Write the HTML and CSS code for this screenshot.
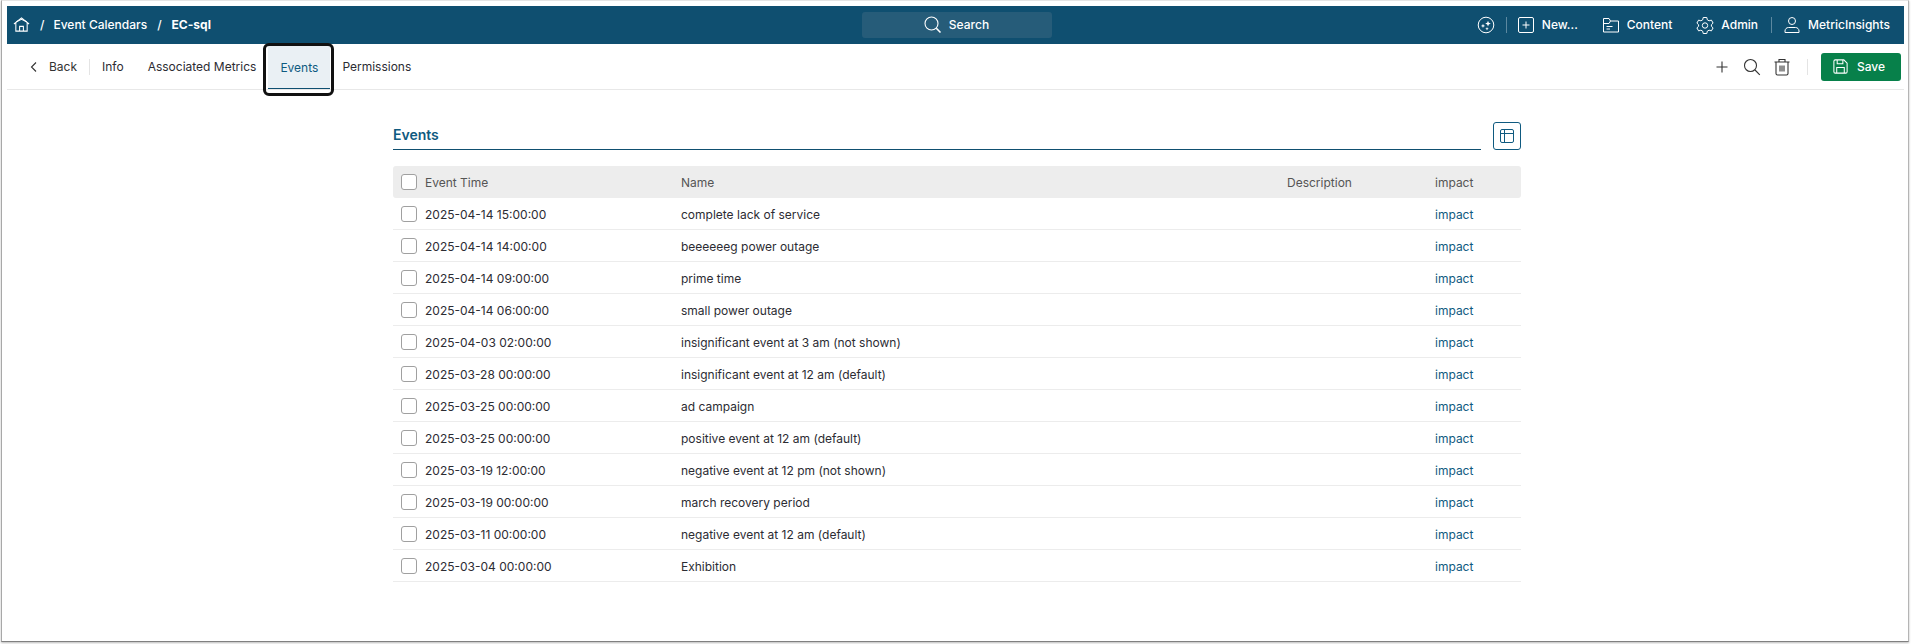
FILE: index.html
```html
<!DOCTYPE html>
<html lang="en">
<head>
<meta charset="utf-8">
<title>Events</title>
<link rel="stylesheet" href="styles.css">
</head>
<body>
<div class="window">
  <header class="topbar">
    <div class="crumbs">
      <svg class="ico-home" viewBox="0 0 18 18" fill="none" stroke="currentColor" stroke-width="1.1"><path d="M1 8.500 9 2l8 6.500M3 7.500V16h12V7.500"/><path d="M3.500 6 9 3.500 14.500 6"/><path d="M7 16v-5h4v5"/></svg>
      <span class="sep sep-first">/</span><span>Event Calendars</span><span class="sep">/</span><b>EC-sql</b>
    </div>
    <div class="search">
      <svg class="ico" viewBox="0 0 18 18" fill="none" stroke="currentColor" stroke-width="1.1"><circle cx="7.500" cy="7.500" r="6.500"/><path d="m12.300 12.300 4.200 4.200" stroke-width="1.600"/></svg>
      <span>Search</span>
    </div>
    <div class="top-actions">
      <svg class="ico ai" viewBox="0 0 18 18" fill="none" stroke="currentColor" stroke-width="1"><circle cx="9" cy="9" r="7.800"/><path d="m11 4.800.8 2 2 .8-2 .8-.8 2-.8-2-2-.8 2-.8zM6 7.800l.6 1.500 1.500.6-1.500.6L6 12l-.6-1.500-1.500-.6 1.500-.6zM10 11l.5 1.200 1.200.5-1.200.5-.5 1.200-.5-1.200-1.200-.5 1.200-.5z" fill="currentColor" stroke="none"/></svg>
      <i class="vline vline-ai"></i>
      <span class="act new"><svg class="ico" viewBox="0 0 18 18" fill="none" stroke="currentColor" stroke-width="1"><rect x="1.500" y="1.500" width="15" height="15" rx="1.500"/><path d="M9 5.500v7M5.500 9h7"/></svg>New...</span>
      <span class="act spaced"><svg class="ico" viewBox="0 0 18 18" fill="none" stroke="currentColor" stroke-width="1"><path d="M1.500 16V2.500h5.500l1.500 2.500h8v11zM8.500 5 7 7.500H1.500"/><path d="M4.500 10.500h6M4.500 13h3.500"/></svg>Content</span>
      <span class="act spaced"><svg class="ico" viewBox="0 0 18 18" fill="none" stroke="currentColor" stroke-width="1"><path d="M7.200 1.500h3.600l.5 2.300 1.800 1 2.300-.7 1.700 3-1.700 1.600v1.600l1.700 1.600-1.700 3-2.300-.7-1.800 1-.5 2.300H7.200l-.5-2.300-1.800-1-2.300.7-1.700-3 1.700-1.600V8.700L.9 7.100l1.700-3 2.300.7 1.800-1z"/><circle cx="9" cy="9.500" r="2.700"/></svg>Admin</span>
      <i class="vline vline-user"></i>
      <span class="act"><svg class="ico" viewBox="0 0 18 18" fill="none" stroke="currentColor" stroke-width="1"><circle cx="9" cy="5" r="3.500"/><path d="M2 16.500v-1.500c0-2 1.500-3.500 3.500-3.500h7c2 0 3.500 1.500 3.500 3.500v1.500z"/></svg>MetricInsights</span>
    </div>
  </header>

  <nav class="tabs">
    <a class="back"><svg viewBox="0 0 10 12" fill="none" stroke="currentColor" stroke-width="1.100"><path d="M7 1.500 2.500 6 7 10.500"/></svg>Back</a>
    <i class="tab-sep"></i>
    <a class="tab">Info</a>
    <a class="tab">Associated Metrics</a>
    <a class="tab active">Events</a>
    <a class="tab">Permissions</a>
    <div class="tools">
      <svg class="tool" viewBox="0 0 18 18" fill="none" stroke="currentColor" stroke-width="1.100"><path d="M9 3.500v11M3.500 9h11"/></svg>
      <svg class="tool" viewBox="0 0 18 18" fill="none" stroke="currentColor" stroke-width="1.100"><circle cx="7.500" cy="7.500" r="6"/><path d="m12 12 4.800 4.800"/></svg>
      <svg class="tool" viewBox="0 0 18 18" fill="none" stroke="currentColor" stroke-width="1.100"><path d="M1.500 4h15M6 4V1.500h6V4M3 4v11.500a1.500 1.500 0 0 0 1.500 1.500h9a1.500 1.500 0 0 0 1.500-1.500V4M7 7.500v6M9 7.500v6M11 7.500v6"/></svg>
      <i class="tab-sep tools-sep"></i>
      <button class="save"><svg viewBox="0 0 18 18" fill="none" stroke="currentColor" stroke-width="1.100"><path d="M2 3.500A1.500 1.500 0 0 1 3.500 2h9L16 5.500v9a1.500 1.500 0 0 1-1.500 1.500h-11A1.500 1.500 0 0 1 2 14.500z"/><path d="M5.500 2v4h6V2M5 16v-6h8v6"/></svg>Save</button>
    </div>
  </nav>

  <main class="main">
    <section class="panel">
      <div class="title-row">
        <h2>Events</h2>
        <button class="layout-btn"><svg viewBox="0 0 14 14" fill="none" stroke="currentColor" stroke-width="1"><rect x=".5" y=".5" width="13" height="13" rx="1.500"/><path d="M.5 4.500h13M4.500 .5v13"/></svg></button>
      </div>
      <div class="grid head">
        <span class="cell-time"><i class="check"></i>Event Time</span><span>Name</span><span>Description</span><span>impact</span>
      </div>
      <div class="grid row"><span class="cell-time"><i class="check"></i>2025-04-14 15:00:00</span><span>complete lack of service</span><span></span><a>impact</a></div>
      <div class="grid row"><span class="cell-time"><i class="check"></i>2025-04-14 14:00:00</span><span>beeeeeeg power outage</span><span></span><a>impact</a></div>
      <div class="grid row"><span class="cell-time"><i class="check"></i>2025-04-14 09:00:00</span><span>prime time</span><span></span><a>impact</a></div>
      <div class="grid row"><span class="cell-time"><i class="check"></i>2025-04-14 06:00:00</span><span>small power outage</span><span></span><a>impact</a></div>
      <div class="grid row"><span class="cell-time"><i class="check"></i>2025-04-03 02:00:00</span><span>insignificant event at 3 am (not shown)</span><span></span><a>impact</a></div>
      <div class="grid row"><span class="cell-time"><i class="check"></i>2025-03-28 00:00:00</span><span>insignificant event at 12 am (default)</span><span></span><a>impact</a></div>
      <div class="grid row"><span class="cell-time"><i class="check"></i>2025-03-25 00:00:00</span><span>ad campaign</span><span></span><a>impact</a></div>
      <div class="grid row"><span class="cell-time"><i class="check"></i>2025-03-25 00:00:00</span><span>positive event at 12 am (default)</span><span></span><a>impact</a></div>
      <div class="grid row"><span class="cell-time"><i class="check"></i>2025-03-19 12:00:00</span><span>negative event at 12 pm (not shown)</span><span></span><a>impact</a></div>
      <div class="grid row"><span class="cell-time"><i class="check"></i>2025-03-19 00:00:00</span><span>march recovery period</span><span></span><a>impact</a></div>
      <div class="grid row"><span class="cell-time"><i class="check"></i>2025-03-11 00:00:00</span><span>negative event at 12 am (default)</span><span></span><a>impact</a></div>
      <div class="grid row"><span class="cell-time"><i class="check"></i>2025-03-04 00:00:00</span><span>Exhibition</span><span></span><a>impact</a></div>
    </section>
  </main>
</div>
</body>
</html>
```

FILE: styles.css
```css
* { box-sizing: border-box; }
html, body { margin: 0; height: 100%; background: #fff; overflow: hidden; }
body {
  font-family: Inter, "Liberation Sans", sans-serif;
  font-size: 12px;
  color: #2c2c33;
  padding: 0 2px 2px 1px;
}
.window {
  height: 642px;
  border-top: 1px solid #e4e4e4;
  border-left: 1px solid #a8a8a8;
  border-right: 1px solid #b4b4b4;
  border-bottom: 1px solid #808080;
  box-shadow: 0 1px 2px #bbb;
  padding: 5px 4px 0 5px;
  display: flex;
  flex-direction: column;
}
.topbar {
  height: 38px;
  flex: none;
  background: #0f4f70;
  color: #fff;
  display: grid;
  grid-template-columns: 1fr 190px 1fr;
  align-items: center;
  font-weight: 500;
}
.crumbs { display: flex; align-items: center; padding-left: 6px; margin-top: -1px; }
.ico-home { width: 17px; height: 17px; }
.sep { margin: 0 10px; }
.sep-first { margin: 0 9px 0 10px; }
.crumbs b { font-weight: 700; }
.search {
  height: 26px;
  border-radius: 3px;
  background: #265c79;
  display: flex;
  align-items: center;
  justify-content: center;
  gap: 7px;
  margin-left: 1px;
  margin-right: -1px;
}
.search span { margin-top: -2px; }
.ico { width: 18px; height: 18px; flex: none; }
.top-actions { display: flex; align-items: center; justify-content: flex-end; padding-right: 14px; margin-top: -1px; }
.act { display: flex; align-items: center; gap: 7px; }
.spaced { margin-left: 24px; }
.vline { width: 1px; height: 16px; background: #5c88a0; }
.vline-ai { margin: 0 10px 0 11px; }
.vline-user { margin: 0 11px 0 13px; }
.tabs {
  height: 46px;
  flex: none;
  border-bottom: 1px solid #e8e8e8;
  display: flex;
  align-items: stretch;
  padding-left: 22px;
  position: relative;
}
.tabs a { display: flex; align-items: center; }
.back { gap: 10px; color: #333; }
.back svg { width: 10px; height: 12px; }
.tab-sep { width: 1px; height: 16px; background: #e4e4e4; align-self: center; margin: 0 12px; }
.tab { padding: 0 12px; }
.tab-sep + .tab { padding-left: 0; }
.tab.active {
  color: #0f5a80;
  background: #eaf0f4;
  margin: 2px 0 0;
  position: relative;
  width: 62px;
  padding: 0;
  justify-content: center;
  box-shadow: inset 0 -1px 0 #0f4f70;
}
.tab.active::after {
  content: "";
  position: absolute;
  inset: -3px -4px -7px -5px;
  border: 3px solid #111;
  border-radius: 6px;
}
.tools { margin-left: auto; display: flex; align-items: center; gap: 12px; padding-right: 3px; }
.tool { width: 18px; height: 18px; color: #333; }
.tools-sep { margin: 0 1px 0 4px; }
.save {
  width: 80px;
  height: 28px;
  border: 0;
  border-radius: 3px;
  background: #07804a;
  color: #fff;
  font: 500 12px Inter, "Liberation Sans", sans-serif;
  display: flex;
  align-items: center;
  justify-content: center;
  gap: 8px;
  padding: 0 5px 0 0;
}
.save svg { width: 17px; height: 17px; }
.main { flex: 1; display: flex; justify-content: center; padding: 0 0 0 11px; }
.panel { width: 1128px; padding-top: 33px; margin-left: -8px; }
.title-row { display: flex; align-items: flex-start; margin-bottom: 16px; height: 27px; }
.title-row h2 {
  flex: 1;
  margin: 0;
  height: 27px;
  font-size: 14px;
  font-weight: 600;
  line-height: 22px;
  padding-top: 1px;
  color: #0f5a80;
  border-bottom: 1px solid #0f4f70;
}
.layout-btn {
  width: 28px;
  height: 28px;
  margin: -1px 0 0 12px;
  padding: 0;
  border: 1px solid #0f5a80;
  border-radius: 3px;
  background: #fff;
  color: #0f5a80;
  display: flex;
  align-items: center;
  justify-content: center;
}
.layout-btn svg { width: 14px; height: 14px; }
.grid {
  display: grid;
  grid-template-columns: 288px 606px 148px 1fr;
  align-items: center;
  height: 32px;
}
.head { background: #ededed; border-radius: 3px; color: #555; }
.row { border-bottom: 1px solid #ececec; padding-top: 1px; }
.cell-time { display: flex; align-items: center; gap: 8px; padding-left: 8px; }
.check {
  width: 16px;
  height: 16px;
  border: 1px solid #a0a0a0;
  border-radius: 3px;
  background: #fff;
  flex: none;
}
.row a { color: #0f5a80; }
```
